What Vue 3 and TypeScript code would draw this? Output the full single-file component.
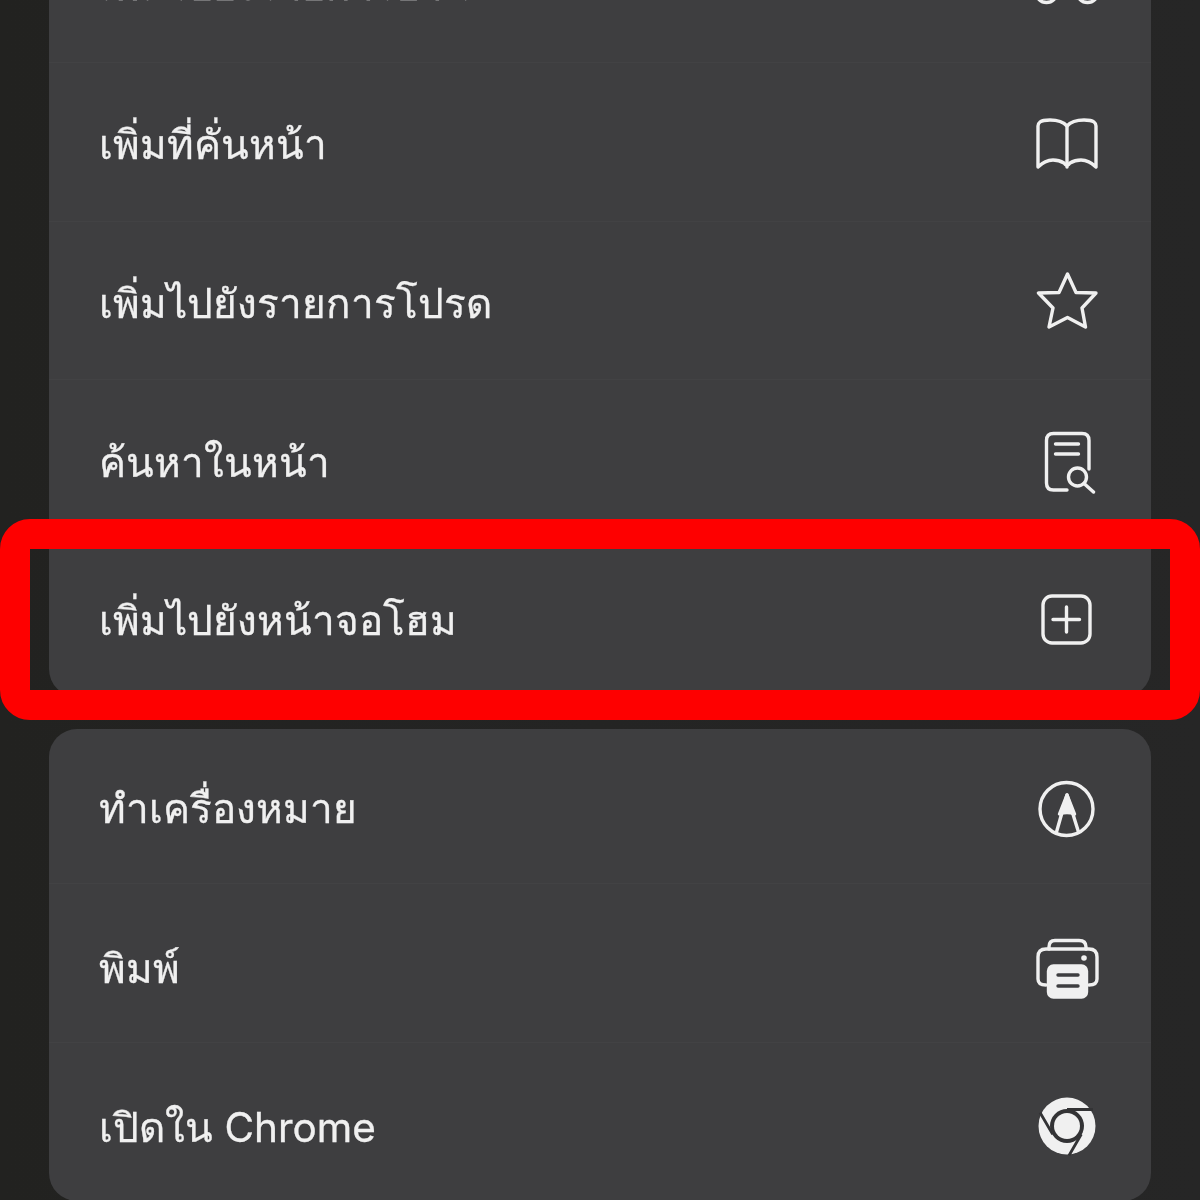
<script setup lang="ts">
interface Row {
  label: string
  icon: string
}

const topRows: Row[] = [
  { label: 'เพิ่มไปยังรายการอ่าน', icon: 'glasses' },
  { label: 'เพิ่มที่คั่นหน้า', icon: 'book' },
  { label: 'เพิ่มไปยังรายการโปรด', icon: 'star' },
  { label: 'ค้นหาในหน้า', icon: 'find' },
  { label: 'เพิ่มไปยังหน้าจอโฮม', icon: 'add' },
]

const bottomRows: Row[] = [
  { label: 'ทำเครื่องหมาย', icon: 'markup' },
  { label: 'พิมพ์', icon: 'print' },
  { label: 'เปิดใน Chrome', icon: 'chrome' },
]
</script>

<template>
  <div class="screen">
    <section class="card card-top">
      <div v-for="row in topRows" :key="row.label" class="row">
        <span class="label">{{ row.label }}</span>
        <svg class="icon" viewBox="0 0 64 64" fill="none" stroke="currentColor" stroke-width="3.4" stroke-linecap="round" stroke-linejoin="round">
          <g v-if="row.icon === 'glasses'">
            <circle cx="11.500" cy="38" r="10.500" />
            <circle cx="52.500" cy="38" r="10.500" />
            <path d="M22 36q10-5 20 0" />
          </g>
          <g v-else-if="row.icon === 'book'">
            <path d="M32 12C28 7.500 22 6 15 6 11 6 7 6.500 5 8Q3 9.500 3 12V53Q10 46 18 46 24 46 29 49 32 53.500 35 49 40 46 46 46 54 46 61 53V12Q61 9.500 59 8C57 6.500 53 6 49 6 42 6 36 7.500 32 12Z" />
            <path d="M32 12V53" />
          </g>
          <path v-else-if="row.icon === 'star'" d="M32.500 2 41 20.500 61 21 47 36 50.500 55 32.500 45.500 14 55 18 36 3.500 21 24 20.500Z" />
          <g v-else-if="row.icon === 'find'">
            <path d="M32 59H18.500Q11.500 59 11.500 52V9.500Q11.500 2.500 18.500 2.500H47Q54 2.500 54 9.500V38" />
            <path d="M20.500 13H43.500M20.500 23H43.500" />
            <circle cx="42.500" cy="46" r="9" />
            <path d="M49 52.500 58.500 61" />
          </g>
          <g v-else-if="row.icon === 'add'">
            <rect x="8" y="7" width="47" height="47" rx="9" />
            <path d="M31.500 18V43M18 30.500H44.500" />
          </g>
        </svg>
      </div>
    </section>

    <section class="card card-bottom">
      <div v-for="row in bottomRows" :key="row.label" class="row">
        <span class="label">{{ row.label }}</span>
        <svg class="icon" viewBox="0 0 64 64" fill="none" stroke="currentColor" stroke-width="3.4" stroke-linecap="round" stroke-linejoin="round">
          <g v-if="row.icon === 'markup'">
            <circle cx="31.500" cy="31" r="26.500" />
            <path d="M32 17 21.500 54M32 17 43.500 54" />
            <path d="M32 17 24.500 36Q32 33 39.500 36Z" fill="currentColor" />
          </g>
          <g v-else-if="row.icon === 'print'">
            <path d="M14 12V10Q14 3.500 20 3.500H44Q51 3.500 51 10V12" />
            <path d="M11 48Q3 48 3 42V20Q3 12 11 12H54Q62 12 62 20V42Q62 48 54 48" />
            <rect x="13.500" y="29" width="38" height="31" rx="5" fill="currentColor" />
            <path d="M23 38H43M23 49H43" stroke="#3e3e40" />
            <circle cx="49" cy="21" r="2.800" fill="currentColor" stroke="none" />
          </g>
          <g v-else-if="row.icon === 'chrome'">
            <circle cx="32" cy="30" r="28.500" fill="currentColor" stroke="none" />
            <circle cx="32" cy="30" r="17" fill="#333335" stroke="none" />
            <circle cx="32" cy="30" r="13" fill="currentColor" stroke="none" />
            <path d="M32 13.500H58M46.300 38.250 34 59.500M17.700 38.250 5 16.500" stroke="#333335" stroke-width="2.800" stroke-linecap="butt" />
          </g>
        </svg>
      </div>
    </section>

    <div class="highlight"></div>
  </div>
</template>

<style scoped>
.screen {
  position: relative;
  display: flex;
  flex-direction: column;
  gap: 32px;
  width: 1200px;
  height: 1200px;
  padding: 0 49px;
  box-sizing: border-box;
  overflow: hidden;
  background: linear-gradient(90deg, #222220 0%, #262626 100%);
  font-family: Inter, "Noto Sans", sans-serif;
}

.card {
  flex-shrink: 0;
  background: #3e3e40;
  border-radius: 28px;
}

.card-top {
  margin-top: -96.67px;
}

.row {
  display: flex;
  align-items: center;
  justify-content: space-between;
  height: 158.67px;
  padding: 7.4px 52.5px 0 50px;
  box-sizing: border-box;
  border-top: 1px solid #424244;
  color: #f0f0f0;
}

.row:first-child {
  border-top: none;
}

.card-bottom .row {
  height: 159px;
  padding-top: 13px;
}

.card-bottom .row:first-child {
  height: 154px;
  padding-top: 8px;
}

.label {
  font-size: 40.5px;
  line-height: 1;
  -webkit-text-stroke: 0.3px #f0f0f0;
  filter: blur(0.5px);
}

.icon {
  width: 64px;
  height: 64px;
  flex-shrink: 0;
  filter: blur(0.5px);
}

.highlight {
  position: absolute;
  left: 0;
  top: 519px;
  width: 1200px;
  height: 201px;
  box-sizing: border-box;
  border: 30px solid #fe0000;
  border-radius: 30px;
}
</style>
